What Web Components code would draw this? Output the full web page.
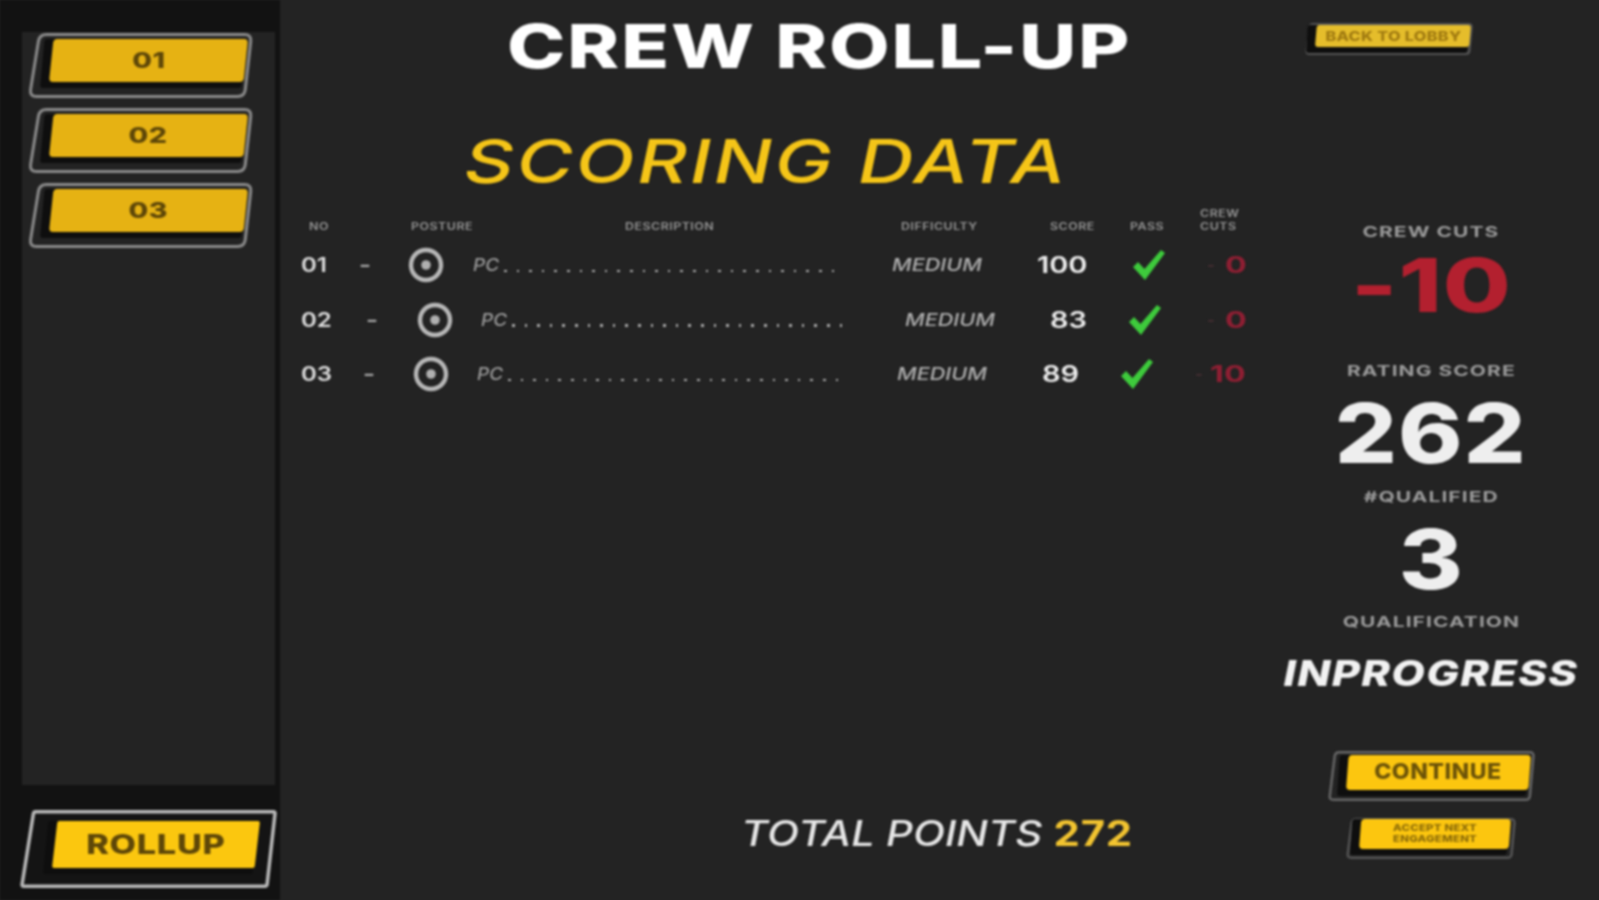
<!DOCTYPE html>
<html><head><meta charset="utf-8"><title>Crew Roll-Up</title>
<style>
html,body{margin:0;height:900px;overflow:hidden;background:#232323}
body{font-family:Inter,"Liberation Sans",sans-serif;color:#fff}
</style></head><body>
<crew-app>
  <side-bar slot="side"></side-bar>
  <score-board slot="center"></score-board>
  <stats-panel slot="right"></stats-panel>
</crew-app>
<script>
class CrewApp extends HTMLElement{constructor(){super();this.attachShadow({mode:'open'}).innerHTML=`<style>
:host{display:flex;width:1599px;height:900px;filter:blur(1px)}
.s{flex:0 0 280px}.c{flex:0 0 1003px}.r{flex:0 0 296px}
</style><div class="s"><slot name="side"></slot></div><div class="c"><slot name="center"></slot></div><div class="r"><slot name="right"></slot></div>`}}
customElements.define('crew-app',CrewApp);

function rounded(pts,r){
 const n=pts.length;let d='';
 for(let i=0;i<n;i++){
  const p=pts[i],a=pts[(i+n-1)%n],b=pts[(i+1)%n];
  const la=Math.hypot(a[0]-p[0],a[1]-p[1]),lb=Math.hypot(b[0]-p[0],b[1]-p[1]);
  const s=[p[0]+(a[0]-p[0])*r/la,p[1]+(a[1]-p[1])*r/la],e=[p[0]+(b[0]-p[0])*r/lb,p[1]+(b[1]-p[1])*r/lb];
  d+=(i?'L':'M')+s[0].toFixed(1)+' '+s[1].toFixed(1)+'Q'+p[0]+' '+p[1]+' '+e[0].toFixed(1)+' '+e[1].toFixed(1);
 }
 return d+'Z';
}
class GameButton extends HTMLElement{constructor(){super();
 const a=n=>+this.getAttribute(n);
 const w=a('w'),h=a('h'),s=a('slant'),l=a('pl'),t=a('pt'),r=a('pr'),b=a('pb'),sw=a('sw')||2.5,rad=a('rad')||5,sx=a('sx')||1;
 const col=this.getAttribute('line')||'#7f7f7f',fill=this.getAttribute('fill')||'#e6b213',fs=a('fs'),bg=this.getAttribute('bg')||'none';
 const d=sw/2, ps=s*.45, B=h-b;
 const outline=rounded([[s+d,d],[w-d,d],[w-s*.7-d,h-d],[d,h-d]],rad);
 const plate=rounded([[l+ps,t],[w-r,t],[w-r-ps,B],[l,B]],Math.min(rad,4));
 const shadow=rounded([[l-9+ps,t],[w-r-4,t],[w-r-ps-2,B+6],[l-9,B+6]],Math.min(rad,3));
 this.attachShadow({mode:'open'}).innerHTML=`<style>
:host{display:block;position:relative;width:${w}px;height:${h}px}
svg{position:absolute;inset:0;overflow:visible}
.t{position:absolute;left:${l}px;right:${r}px;top:${t}px;bottom:${b}px;display:flex;align-items:center;justify-content:center;text-align:center;
font:800 ${fs}px/1.15 Inter,"Liberation Sans",sans-serif;letter-spacing:.02em;color:${this.getAttribute('ink')||'#5e4708'}}
.t span{display:inline-block;transform:scaleX(${sx})}
</style><svg width="${w}" height="${h}" viewBox="0 0 ${w} ${h}">
<path d="${outline}" fill="${bg}" stroke="${col}" stroke-width="${sw}"/>
<path d="${shadow}" fill="#0e0e0e"/>
<path d="${plate}" fill="${fill}"/>
</svg><div class="t"><span><slot></slot></span></div>`}}
customElements.define('game-button',GameButton);

class SideBar extends HTMLElement{constructor(){super();this.attachShadow({mode:'open'}).innerHTML=`<style>
:host{display:block;height:900px;background:#121212;overflow:hidden}
.panel{box-sizing:border-box;margin:32px 5px 0 22px;height:753px;background:#232323;padding:1px 0 0 6px;display:flex;flex-direction:column;gap:10px}
.roll{display:flex;margin:25px 0 0 20px}
</style><div class="panel">
<game-button w="225" h="65" slant="10" rad="7" sw="3" line="#8a8a8a" pl="21" pt="6" pr="5" pb="16" fs="22" sx="1.3">01</game-button>
<game-button w="225" h="65" slant="10" rad="7" sw="3" line="#8a8a8a" pl="21" pt="6" pr="5" pb="16" fs="22" sx="1.3">02</game-button>
<game-button w="225" h="65" slant="10" rad="7" sw="3" line="#8a8a8a" pl="21" pt="6" pr="5" pb="16" fs="22" sx="1.3">03</game-button>
</div><div class="roll"><game-button w="257" h="78" slant="12" rad="2" pl="32" pt="11" pr="17" pb="20" fs="27" sx="1.27" line="#b9b9b9" sw="3.5" fill="#fbc70f" bg="#141414">ROLLUP</game-button></div>`}}
customElements.define('side-bar',SideBar);

class CrewRow extends HTMLElement{constructor(){super();
 const g=n=>this.getAttribute(n);
 const cut=g('cut');
 this.attachShadow({mode:'open'}).innerHTML=`<style>
:host{display:grid;grid-template-columns:${g('cols')};height:54.5px;align-items:center;margin-left:${g('x')}px;color:#ddd;white-space:nowrap}
.n,.m,.sc,.pc{transform-origin:0 50%}
.n{font:600 20px Inter,sans-serif;transform:scaleX(1.2)}
.d{font:800 17px Inter,sans-serif;color:#aaa;transform:scaleX(1.5);transform-origin:0 50%}
svg{display:block}
.desc{display:flex;align-items:center;gap:5px}
.pc{font:italic 500 17px Inter,sans-serif;color:#9a9a9a;transform:scaleX(1.12)}
.dots{flex:0 0 331px;height:2.5px;margin:11px 0 0 3px;background:repeating-linear-gradient(90deg,#aaa 0 2.6px,transparent 2.6px 12.6px)}
.m{font:italic 500 17px Inter,sans-serif;color:#b0b0b0;transform:scaleX(1.27)}
.sc{font:600 23px Inter,sans-serif;color:#eee;transform:scaleX(1.26)}
.cut{display:flex;gap:${g('cg')}px;align-items:center;font:700 23px Inter,sans-serif;color:#8f1f33}
.cut span{display:inline-block;transform:scaleX(1.4);transform-origin:0 50%}
.cut i{font:500 17px Inter,sans-serif;color:#4a3035}
</style>
<span class="n">${g('no')}</span><span class="d">-</span>
<svg width="36" height="36" viewBox="0 0 36 36"><circle cx="18" cy="18" r="15" fill="none" stroke="#b8b8b8" stroke-width="4.400"/><circle cx="18" cy="18" r="4.800" fill="#b0b0b0"/></svg>
<span class="desc"><span class="pc">PC</span><span class="dots"></span></span>
<span class="m">MEDIUM</span><span class="sc">${g('score')}</span>
<svg width="34" height="32" viewBox="0 0 34 32"><path d="M1 18L6 13L12.500 20L29 1L33 4L13 31Z" fill="#3ecb3c"/></svg>
<span class="cut"><i>-</i><span>${cut}</span></span>`}}
customElements.define('crew-row',CrewRow);

class ScoreBoard extends HTMLElement{constructor(){super();this.attachShadow({mode:'open'}).innerHTML=`<style>
:host{display:flex;flex-direction:column;height:900px;white-space:nowrap}
h1{align-self:flex-start;margin:16px 0 0 227px;font:800 61px/60px Inter,sans-serif;letter-spacing:.025em;color:#fff;transform:scaleX(1.286);transform-origin:0 50%}
h2{align-self:flex-start;margin:55px 0 0 184px;font:italic 500 60px/60px Inter,sans-serif;letter-spacing:.035em;color:#f5c518;transform:scaleX(1.284);transform-origin:0 50%}
.head{display:grid;grid-template-columns:102px 214px 276px 149px 80px 70px 50px;margin:24px 0 0 29px;height:23px;align-items:center;font:600 10px/13px Inter,sans-serif;letter-spacing:.04em;color:#969696}
.head span{transform:scaleX(1.24);transform-origin:0 50%}
.head .cc{align-self:start;margin-top:-8px}
.total{align-self:flex-start;margin:auto 0 47px 461px;font:italic 500 35px/40px Inter,sans-serif;color:#e6e6e6;transform:scaleX(1.195);transform-origin:0 50%}
.total b{font-style:normal;font-weight:700;color:#f2c430;letter-spacing:.02em}
</style>
<h1>CREW ROLL-UP</h1>
<h2>SCORING DATA</h2>
<div class="head"><span>NO</span><span>POSTURE</span><span>DESCRIPTION</span><span>DIFFICULTY</span><span>SCORE</span><span>PASS</span><span class="cc">CREW<br>CUTS</span></div>
<div class="rows">
<crew-row x="21" no="01" cg="10" cols="58px 49px 65px 419px 145px 95px 75px auto" score="100" cut="0"></crew-row>
<crew-row x="21" no="02" cg="10" cols="65px 51px 64px 424px 145px 78px 79px auto" score="83" cut="0"></crew-row>
<crew-row x="21" no="03" cg="7" cols="62px 50px 64px 420px 145px 78px 75px auto" score="89" cut="10"></crew-row>
</div>
<div class="total">TOTAL POINTS <b>272</b></div>`}}
customElements.define('score-board',ScoreBoard);

class StatsPanel extends HTMLElement{constructor(){super();this.attachShadow({mode:'open'}).innerHTML=`<style>
:host{display:flex;flex-direction:column;align-items:center;height:900px;white-space:nowrap}
.back{align-self:flex-start;margin:23px 0 0 22px}
.l{font:700 15px/20px Inter,sans-serif;letter-spacing:.05em;color:#9b9b9b;transform:scaleX(1.4)}
.big{font:800 82px/60px Inter,sans-serif;color:#eee;letter-spacing:.01em;transform:scaleX(1.19)}
.red{font-size:74px;color:#b3202f;transform:scaleX(1.33)}
.ip{margin-top:21px;font:italic 800 35px/40px Inter,sans-serif;letter-spacing:.03em;color:#f2f2f2;transform:scaleX(1.24)}
</style>
<game-button class="back" w="168" h="32" slant="4" rad="3" pl="10" pt="2" pr="2" pb="8" fs="13" sx="1.25" fill="#e5bd2b" ink="#a07a10" line="#555">BACK TO LOBBY</game-button>
<div class="l" style="margin-top:167px">CREW CUTS</div>
<div class="big red" style="margin-top:13px">-10</div>
<div class="l" style="margin-top:46px">RATING SCORE</div>
<div class="big" style="margin-top:23px">262</div>
<div class="l" style="margin-top:23px">#QUALIFIED</div>
<div class="big" style="margin-top:23px">3</div>
<div class="l" style="margin-top:22px">QUALIFICATION</div>
<div class="ip">INPROGRESS</div>
<game-button style="margin-top:58px" w="207" h="50" slant="6" rad="4" pl="18" pt="4" pr="4" pb="11" fs="21" sx="1.1" fill="#fcc60f" ink="#6c5308" line="#666">CONTINUE</game-button>
<game-button style="margin-top:17px" w="170" h="41" slant="5" rad="4" pl="13" pt="1" pr="5" pb="10" fs="9.500" sx="1.2" fill="#fcc60f" ink="#8a6a08" line="#555">ACCEPT NEXT<br>ENGAGEMENT</game-button>`}}
customElements.define('stats-panel',StatsPanel);
</script>
</body></html>
